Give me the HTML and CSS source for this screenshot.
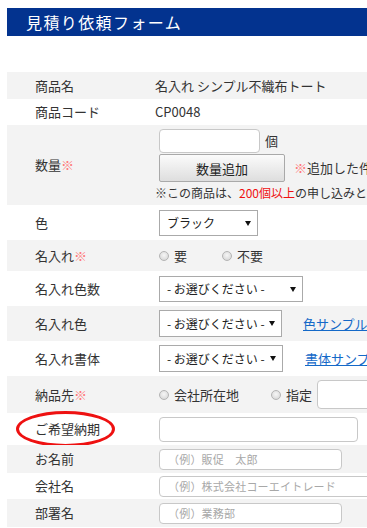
FILE: index.html
```html
<!DOCTYPE html>
<html lang="ja">
<head>
<meta charset="utf-8">
<title>見積り依頼フォーム</title>
<link rel="stylesheet" href="styles.css">
</head>
<body>
<h1 class="page-title">見積り依頼フォーム</h1>
<div class="form">
  <div class="row row--27">
    <div class="label">商品名</div>
    <div class="value">名入れ シンプル不織布トート</div>
  </div>
  <div class="row row--26">
    <div class="label">商品コード</div>
    <div class="value">CP0048</div>
  </div>
  <div class="row row--qty">
    <div class="label">数量<span class="req">※</span></div>
    <div class="value value--stack">
      <div class="line"><input class="text text--qty" type="text"><span class="unit">個</span></div>
      <div class="line"><button class="btn" type="button">数量追加</button><span class="note"><span class="req">※</span>追加した件数分の数量をご入力ください</span></div>
      <div class="line line--small">※この商品は、<span class="red">200個以上</span>の申し込みとなります。</div>
    </div>
  </div>
  <div class="row row--35">
    <div class="label">色</div>
    <div class="value"><span class="select select--99"><select><option>ブラック</option></select></span></div>
  </div>
  <div class="row row--31">
    <div class="label">名入れ<span class="req">※</span></div>
    <div class="value">
      <label class="radio"><input type="radio" name="print">要</label>
      <label class="radio"><input type="radio" name="print">不要</label>
    </div>
  </div>
  <div class="row row--35">
    <div class="label">名入れ色数</div>
    <div class="value"><span class="select select--144"><select><option>- お選びください -</option></select></span></div>
  </div>
  <div class="row row--35">
    <div class="label">名入れ色</div>
    <div class="value"><span class="select select--123"><select><option>- お選びください -</option></select></span><a class="link" href="#">色サンプルはこちら</a></div>
  </div>
  <div class="row row--35">
    <div class="label">名入れ書体</div>
    <div class="value"><span class="select select--124"><select><option>- お選びください -</option></select></span><a class="link link--font" href="#">書体サンプルはこちら</a></div>
  </div>
  <div class="row row--37">
    <div class="label">納品先<span class="req">※</span></div>
    <div class="value">
      <label class="radio"><input type="radio" name="dest">会社所在地</label>
      <label class="radio radio--near"><input type="radio" name="dest">指定</label>
      <input class="text text--dest" type="text">
    </div>
  </div>
  <div class="row row--32 row--marked">
    <div class="label">ご希望納期</div>
    <div class="value"><input class="text text--date" type="text"></div>
    <span class="mark"></span>
  </div>
  <div class="row row--28">
    <div class="label">お名前</div>
    <div class="value"><input class="text text--small" type="text" placeholder="（例）販促　太郎"></div>
  </div>
  <div class="row row--26">
    <div class="label">会社名</div>
    <div class="value"><input class="text text--wide" type="text" placeholder="（例）株式会社コーエイトレード"></div>
  </div>
  <div class="row row--28">
    <div class="label">部署名</div>
    <div class="value"><input class="text text--small" type="text" placeholder="（例）業務部"></div>
  </div>
</div>
</body>
</html>
```
FILE: styles.css
```css
html, body {
  margin: 0;
  padding: 0;
  overflow: hidden;
  background: #fff;
}

body {
  width: 520px;
  padding: 8px 0 0 7px;
  font-family: "Noto Sans CJK JP", "Noto Sans", sans-serif;
  color: #333;
}

.page-title {
  margin: 0;
  height: 28px;
  padding-left: 19px;
  background: #03338f;
  color: #fff;
  font-size: 16px;
  font-weight: normal;
  letter-spacing: 1.4px;
  line-height: 28px;
}

.form {
  margin-top: 36px;
}

.row {
  position: relative;
  display: grid;
  grid-template-columns: 148px 1fr;
  align-items: center;
  font-size: 13px;
  line-height: 16px;
}

.row:nth-child(odd) {
  background: #f3f3f3;
}

.row--26 { height: 26px; }
.row--27 { height: 27px; }
.row--28 { height: 28px; }
.row--31 { height: 31px; }
.row--32 { height: 32px; }
.row--35 { height: 35px; }
.row--37 { height: 37px; }
.row--qty { height: 80px; }

.label {
  padding-left: 28px;
  white-space: nowrap;
}

.req {
  color: #ff7a7a;
}

.red {
  color: #f01010;
}

.value {
  display: flex;
  align-items: center;
  white-space: nowrap;
}

.value--stack {
  flex-direction: column;
  align-items: flex-start;
  align-self: start;
  padding-top: 4px;
}

.line {
  display: flex;
  align-items: center;
}

.line--small {
  margin-top: 3px;
  font-size: 12px;
}

.text {
  box-sizing: border-box;
  margin: 0 0 0 4px;
  padding: 0 8px;
  border: 1px solid #c8c8c8;
  border-radius: 4px;
  background: #fff;
  font-family: inherit;
  font-size: 11px;
  letter-spacing: 0.2px;
  color: #333;
}

.text::placeholder {
  color: #a8a8a8;
}

.text--qty { width: 101px; height: 24px; }
.text--dest { width: 120px; height: 29px; margin-left: 5px; }
.text--date { width: 199px; height: 25px; }
.text--small { width: 183px; height: 21px; }
.text--wide { width: 260px; height: 21px; }

.unit {
  margin-left: 5px;
}

.btn {
  box-sizing: border-box;
  width: 126px;
  height: 28px;
  margin: 1px 0 0 4px;
  border: 1px solid #a9a9a9;
  border-radius: 2px;
  background: linear-gradient(#fbfbfb, #dedede);
  font-family: inherit;
  font-size: 13px;
  color: #222;
}

.note {
  margin-left: 9px;
  font-size: 13px;
}

.select {
  position: relative;
  display: inline-block;
  margin-left: 4px;
}

.select select {
  -webkit-appearance: none;
  appearance: none;
  box-sizing: border-box;
  height: 26px;
  margin: 0;
  padding: 0 0 0 7px;
  border: 1px solid #aaa;
  border-radius: 0;
  background: #fff;
  font-family: inherit;
  font-size: 12px;
  color: #222;
}

.select::after {
  content: "";
  position: absolute;
  right: 7px;
  top: 11px;
  border-left: 3px solid transparent;
  border-right: 3px solid transparent;
  border-top: 5px solid #111;
  pointer-events: none;
}

.select--99 select { width: 99px; }
.select--144 select { width: 144px; }
.select--123 select { width: 123px; height: 27px; }
.select--124 select { width: 124px; height: 27px; }

.link {
  margin-left: 21px;
  color: #1469c8;
  text-decoration: underline;
}

.link--font {
  margin-left: 22px;
}

.radio {
  display: inline-flex;
  align-items: center;
}

.radio + .radio {
  margin-left: 31px;
}

.radio + .radio--near {
  margin-left: 28px;
}

.radio input {
  -webkit-appearance: none;
  appearance: none;
  box-sizing: border-box;
  width: 10px;
  height: 10px;
  margin: 0 5px 0 4px;
  border: 1px solid #b4b4b4;
  border-radius: 50%;
  background: radial-gradient(circle at 50% 40%, #f6f6f6, #d2d2d2);
}

.mark {
  position: absolute;
  left: 9px;
  top: -2px;
  box-sizing: border-box;
  width: 99px;
  height: 36px;
  border: 3px solid #ee1111;
  border-radius: 50%;
  pointer-events: none;
}
```
